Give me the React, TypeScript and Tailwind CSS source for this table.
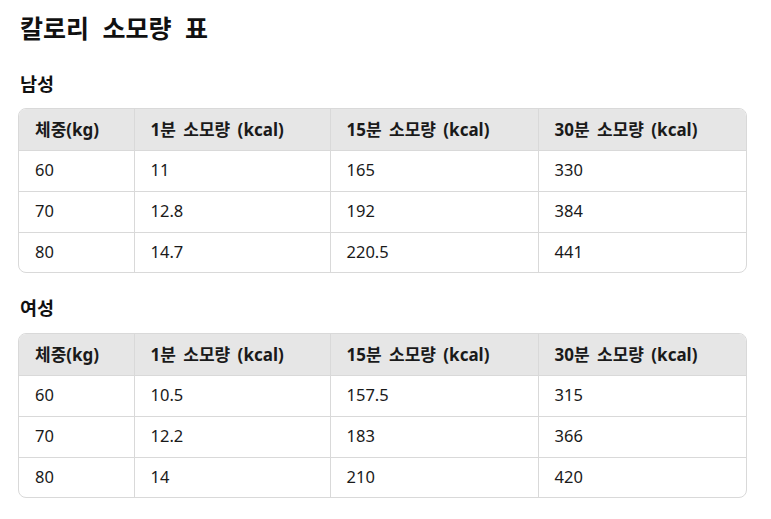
const font = { fontFamily: '"Noto Sans", "Noto Sans CJK KR", sans-serif' };

const male = [
  ["60", "11", "165", "330"],
  ["70", "12.8", "192", "384"],
  ["80", "14.7", "220.5", "441"],
];

const female = [
  ["60", "10.5", "157.5", "315"],
  ["70", "12.2", "183", "366"],
  ["80", "14", "210", "420"],
];

const headers = ["체중(kg)", "1분 소모량 (kcal)", "15분 소모량 (kcal)", "30분 소모량 (kcal)"];

function CalorieTable({ rows }: { rows: string[][] }) {
  return (
    <div className="w-[729px] overflow-hidden rounded-lg border border-[#d9d9d9]">
      <table className="w-full table-fixed border-collapse text-[16.5px] text-[#1a1a1a]">
        <colgroup>
          <col className="w-[115px]" />
          <col className="w-[196px]" />
          <col className="w-[208px]" />
          <col />
        </colgroup>
        <thead>
          <tr className="h-[41px] bg-[#e6e6e6]">
            {headers.map((h, i) => (
              <th
                key={h}
                className={`px-4 text-left text-[17px] font-bold [word-spacing:3px] ${i > 0 ? "border-l border-[#d9d9d9]" : ""}`}
              >
                {h}
              </th>
            ))}
          </tr>
        </thead>
        <tbody>
          {rows.map((r, ri) => (
            <tr key={ri} className={`border-t border-[#d9d9d9] ${ri === 2 ? "h-[40px]" : "h-[41px]"}`}>
              {r.map((c, i) => (
                <td key={i} className={`px-4 ${i > 0 ? "border-l border-[#d9d9d9]" : ""}`}>
                  {c}
                </td>
              ))}
            </tr>
          ))}
        </tbody>
      </table>
    </div>
  );
}

export default function App() {
  return (
    <div className="min-h-screen bg-white px-[18px] pt-[12px] text-[#111]" style={font}>
      <h1 className="pl-[2px] text-[25px] font-bold leading-[32px] [word-spacing:7px]">칼로리 소모량 표</h1>
      <h2 className="mt-[27px] pl-[2px] text-[18.5px] font-bold leading-[26px]">남성</h2>
      <div className="mt-[11px]">
        <CalorieTable rows={male} />
      </div>
      <h2 className="mt-[22px] pl-[2px] text-[18.5px] font-bold leading-[26px]">여성</h2>
      <div className="mt-[12px]">
        <CalorieTable rows={female} />
      </div>
    </div>
  );
}
